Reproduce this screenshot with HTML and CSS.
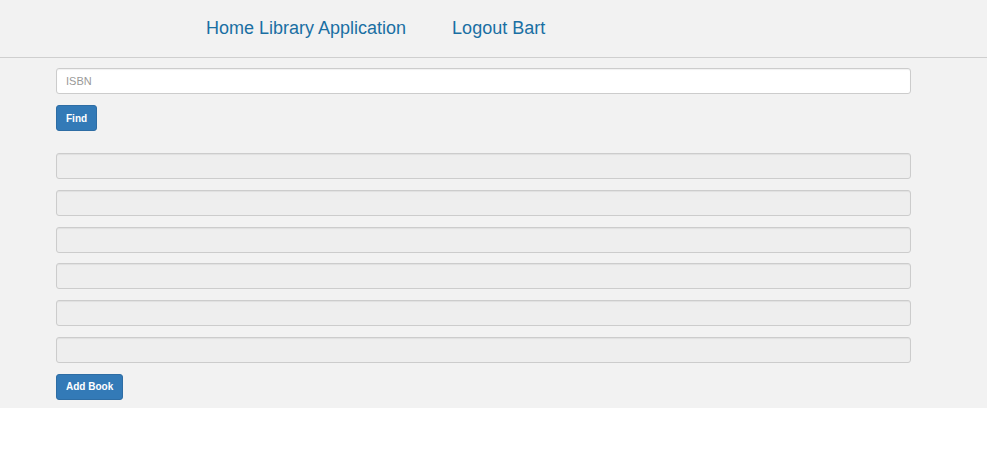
FILE: index.html
```html
<!DOCTYPE html>
<html>
<head>
<meta charset="utf-8">
<link rel="stylesheet" href="styles.css">
</head>
<body>
<div class="page">
  <header class="header">
    <a class="nav-link" href="#">Home Library Application</a>
    <a class="nav-link" href="#">Logout Bart</a>
  </header>
  <main class="content">
    <input class="field" type="text" placeholder="ISBN">
    <button class="btn find">Find</button>
    <div class="fields">
      <input class="field disabled" type="text" disabled>
      <input class="field disabled" type="text" disabled>
      <input class="field disabled" type="text" disabled>
      <input class="field disabled" type="text" disabled>
      <input class="field disabled" type="text" disabled>
      <input class="field disabled" type="text" disabled>
    </div>
    <button class="btn add">Add Book</button>
  </main>
</div>
</body>
</html>
```
FILE: styles.css
```css
* { box-sizing: border-box; }
html, body { margin: 0; padding: 0; background: #fff; }
body { font-family: "Liberation Sans", Arial, sans-serif; }
.page { background: #f2f2f2; height: 408px; }
.header {
  height: 58px;
  border-bottom: 1px solid #cfcfcf;
  display: flex;
  align-items: center;
  padding-left: 206px;
  gap: 46px;
  padding-bottom: 1px;
}
.nav-link {
  color: #1a6fa3;
  text-decoration: none;
  font-size: 18px;
}
.content {
  padding: 10px 0 0 56px;
  width: 911px;
  display: flex;
  flex-direction: column;
  align-items: flex-start;
}
.field {
  display: block;
  width: 855px;
  height: 26px;
  border: 1px solid #cccccc;
  border-radius: 3px;
  background: #fff;
  padding: 0 9px;
  font-family: "Liberation Sans", Arial, sans-serif;
  font-size: 11px;
  box-shadow: inset 0 1px 1px rgba(0,0,0,0.06);
}
.field::placeholder { color: #999; }
.fields {
  display: flex;
  flex-direction: column;
  gap: 10.8px;
  margin-top: 22px;
}
.field.disabled { background: #eeeeee; }
.btn {
  height: 26px;
  border: 1px solid #2e6da4;
  background: #337ab7;
  color: #fff;
  font-family: "Liberation Sans", Arial, sans-serif;
  font-weight: bold;
  font-size: 10px;
  border-radius: 3px;
  padding: 0 9px;
}
.find { margin-top: 11px; }
.add { margin-top: 11px; }
```
